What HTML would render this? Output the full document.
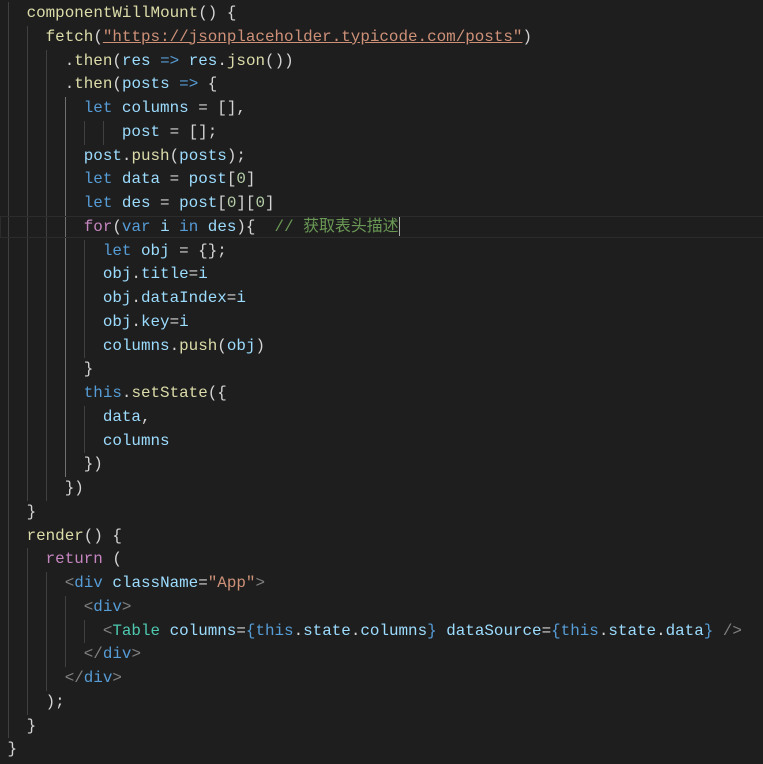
<!DOCTYPE html>
<html><head><meta charset="utf-8"><style>
html,body{margin:0;padding:0;background:#1e1e1e;}
body{width:763px;height:764px;overflow:hidden;position:relative;}
#code{position:absolute;left:7.5px;top:2px;font-family:"Liberation Mono","Noto Sans CJK SC",monospace;font-size:15.9px;color:#d4d4d4;}
.l{height:23.75px;line-height:23.75px;white-space:pre;position:relative;}
.g{display:inline-block;width:2ch;height:23.75px;vertical-align:top;box-shadow:inset 1px 0 0 #404040;}
.ga{box-shadow:inset 1px 0 0 #707070;}
.cur{position:absolute;left:-8px;width:771px;top:0;height:22px;border:1px solid #2c2c2c;box-sizing:border-box;}
.k{color:#569cd6}.c{color:#c586c0}.f{color:#dcdcaa}.v{color:#9cdcfe}.s{color:#ce9178}.n{color:#b5cea8}.cm{color:#6a9955}.t{color:#808080}.tb{color:#4ec9b0}
.su{text-decoration:underline;text-decoration-color:#ce9178;}
.caret{display:inline-block;width:1.5px;height:19px;background:#aeafad;vertical-align:middle;}
</style></head><body><div id="code">
<div class="l"><span class="g"></span><span class="f">componentWillMount</span>() {</div>
<div class="l"><span class="g"></span><span class="g"></span><span class="f">fetch</span>(<span class="s su">"https://jsonplaceholder.typicode.com/posts"</span>)</div>
<div class="l"><span class="g"></span><span class="g"></span><span class="g"></span>.<span class="f">then</span>(<span class="v">res</span> <span class="k">=&gt;</span> <span class="v">res</span>.<span class="f">json</span>())</div>
<div class="l"><span class="g"></span><span class="g"></span><span class="g"></span>.<span class="f">then</span>(<span class="v">posts</span> <span class="k">=&gt;</span> {</div>
<div class="l"><span class="g"></span><span class="g"></span><span class="g"></span><span class="g ga"></span><span class="k">let</span> <span class="v">columns</span> = [],</div>
<div class="l"><span class="g"></span><span class="g"></span><span class="g"></span><span class="g ga"></span><span class="g"></span><span class="g"></span><span class="v">post</span> = [];</div>
<div class="l"><span class="g"></span><span class="g"></span><span class="g"></span><span class="g ga"></span><span class="v">post</span>.<span class="f">push</span>(<span class="v">posts</span>);</div>
<div class="l"><span class="g"></span><span class="g"></span><span class="g"></span><span class="g ga"></span><span class="k">let</span> <span class="v">data</span> = <span class="v">post</span>[<span class="n">0</span>]</div>
<div class="l"><span class="g"></span><span class="g"></span><span class="g"></span><span class="g ga"></span><span class="k">let</span> <span class="v">des</span> = <span class="v">post</span>[<span class="n">0</span>][<span class="n">0</span>]</div>
<div class="l"><div class="cur"></div><span class="g"></span><span class="g"></span><span class="g"></span><span class="g ga"></span><span class="c">for</span>(<span class="k">var</span> <span class="v">i</span> <span class="k">in</span> <span class="v">des</span>){  <span class="cm">// 获取表头描述</span><span class="caret"></span></div>
<div class="l"><span class="g"></span><span class="g"></span><span class="g"></span><span class="g ga"></span><span class="g"></span><span class="k">let</span> <span class="v">obj</span> = {};</div>
<div class="l"><span class="g"></span><span class="g"></span><span class="g"></span><span class="g ga"></span><span class="g"></span><span class="v">obj</span>.<span class="v">title</span>=<span class="v">i</span></div>
<div class="l"><span class="g"></span><span class="g"></span><span class="g"></span><span class="g ga"></span><span class="g"></span><span class="v">obj</span>.<span class="v">dataIndex</span>=<span class="v">i</span></div>
<div class="l"><span class="g"></span><span class="g"></span><span class="g"></span><span class="g ga"></span><span class="g"></span><span class="v">obj</span>.<span class="v">key</span>=<span class="v">i</span></div>
<div class="l"><span class="g"></span><span class="g"></span><span class="g"></span><span class="g ga"></span><span class="g"></span><span class="v">columns</span>.<span class="f">push</span>(<span class="v">obj</span>)</div>
<div class="l"><span class="g"></span><span class="g"></span><span class="g"></span><span class="g ga"></span>}</div>
<div class="l"><span class="g"></span><span class="g"></span><span class="g"></span><span class="g ga"></span><span class="k">this</span>.<span class="f">setState</span>({</div>
<div class="l"><span class="g"></span><span class="g"></span><span class="g"></span><span class="g ga"></span><span class="g"></span><span class="v">data</span>,</div>
<div class="l"><span class="g"></span><span class="g"></span><span class="g"></span><span class="g ga"></span><span class="g"></span><span class="v">columns</span></div>
<div class="l"><span class="g"></span><span class="g"></span><span class="g"></span><span class="g ga"></span>})</div>
<div class="l"><span class="g"></span><span class="g"></span><span class="g"></span>})</div>
<div class="l"><span class="g"></span>}</div>
<div class="l"><span class="g"></span><span class="f">render</span>() {</div>
<div class="l"><span class="g"></span><span class="g"></span><span class="c">return</span> (</div>
<div class="l"><span class="g"></span><span class="g"></span><span class="g"></span><span class="t">&lt;</span><span class="k">div</span> <span class="v">className</span>=<span class="s">"App"</span><span class="t">&gt;</span></div>
<div class="l"><span class="g"></span><span class="g"></span><span class="g"></span><span class="g"></span><span class="t">&lt;</span><span class="k">div</span><span class="t">&gt;</span></div>
<div class="l"><span class="g"></span><span class="g"></span><span class="g"></span><span class="g"></span><span class="g"></span><span class="t">&lt;</span><span class="tb">Table</span> <span class="v">columns</span>=<span class="k">{this</span>.<span class="v">state</span>.<span class="v">columns</span><span class="k">}</span> <span class="v">dataSource</span>=<span class="k">{this</span>.<span class="v">state</span>.<span class="v">data</span><span class="k">}</span> <span class="t">/&gt;</span></div>
<div class="l"><span class="g"></span><span class="g"></span><span class="g"></span><span class="g"></span><span class="t">&lt;/</span><span class="k">div</span><span class="t">&gt;</span></div>
<div class="l"><span class="g"></span><span class="g"></span><span class="g"></span><span class="t">&lt;/</span><span class="k">div</span><span class="t">&gt;</span></div>
<div class="l"><span class="g"></span><span class="g"></span>);</div>
<div class="l"><span class="g"></span>}</div>
<div class="l">}</div>
</div></body></html>
